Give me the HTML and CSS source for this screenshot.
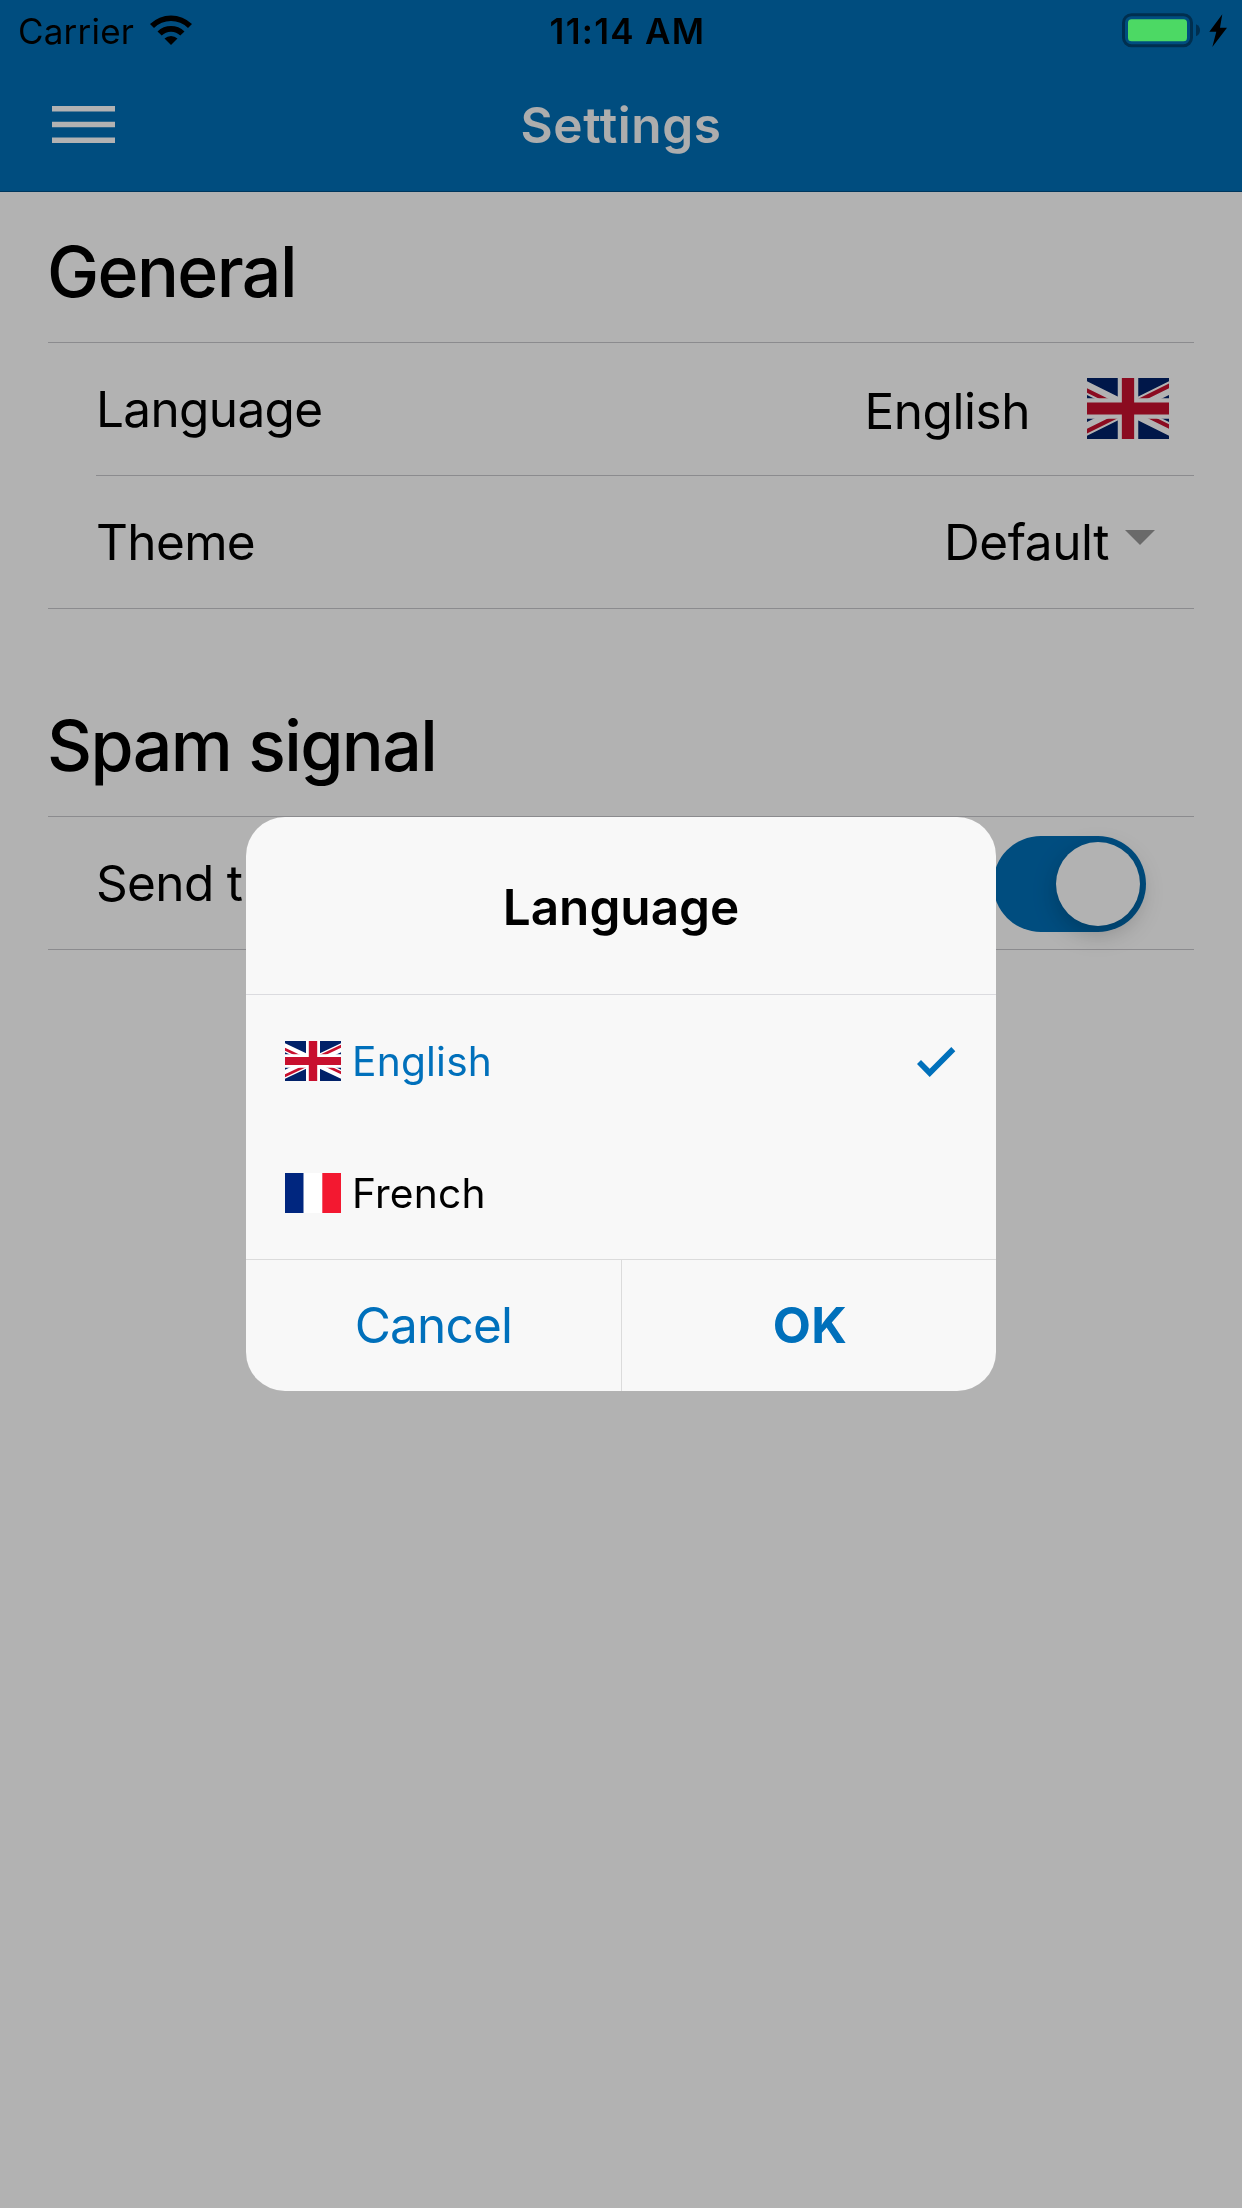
FILE: index.html
```html
<!DOCTYPE html>
<html lang="en">
<head>
<meta charset="utf-8">
<title>Settings</title>
<link rel="stylesheet" href="styles.css">
</head>
<body>
<svg width="0" height="0" class="defs" aria-hidden="true">
  <clipPath id="saltire"><path d="M30 15h30v15zv15h-30zh-30v-15zv-15h30z"/></clipPath>
  <symbol id="flag-gb" viewBox="10 0 40 30" preserveAspectRatio="none">
    <path fill="#012169" d="M0 0h60v30H0z"/>
    <path stroke="#fff" stroke-width="6" d="M0 0 60 30M60 0 0 30"/>
    <path stroke="#c8102e" stroke-width="4" clip-path="url(#saltire)" d="M0 0 60 30M60 0 0 30"/>
    <path stroke="#fff" stroke-width="10" d="M30 0v30M0 15h60"/>
    <path stroke="#c8102e" stroke-width="6" d="M30 0v30M0 15h60"/>
  </symbol>
</svg>
<div class="page">
  <header class="navbar">
    <svg class="menu" viewBox="0 0 63 37"><path fill="#fff" d="M0 0h63v5.500H0zM0 15.700h63v5.500H0zM0 31.400h63v5.500H0z"/></svg>
    <h1 class="navbar-title">Settings</h1>
  </header>
  <main>
    <section class="group">
      <h2 class="group-title">General</h2>
      <div class="list">
        <div class="row">
          <span class="label">Language</span>
          <span class="value value-language">English</span>
          <svg class="flag-large"><use href="#flag-gb"/></svg>
        </div>
        <div class="row">
          <span class="label">Theme</span>
          <span class="value value-theme">Default</span>
          <span class="caret"></span>
        </div>
      </div>
    </section>
    <section class="group">
      <h2 class="group-title">Spam signal</h2>
      <div class="list">
        <div class="row">
          <span class="label">Send t</span>
          <span class="switch"><span class="knob"></span></span>
        </div>
      </div>
    </section>
  </main>
</div>
<div class="backdrop">
  <div class="dialog">
    <h2 class="dialog-title">Language</h2>
    <div class="options">
      <div class="option selected">
        <svg class="flag"><use href="#flag-gb"/></svg>
        <span>English</span>
        <svg class="check" viewBox="0 0 38 30"><path fill="currentColor" d="M0 17 4 13 12.700 21.700 34.300 0 38.300 4.300 12.700 30z"/></svg>
      </div>
      <div class="option">
        <svg class="flag" viewBox="0 0 56 41" preserveAspectRatio="none"><path fill="#00267f" d="M0 0h18.700v41H0z"/><path fill="#fff" d="M18.700 0h18.600v41H18.700z"/><path fill="#f31830" d="M37.300 0H56v41H37.300z"/></svg>
        <span>French</span>
      </div>
    </div>
    <div class="actions">
      <span class="action cancel">Cancel</span>
      <span class="action ok">OK</span>
    </div>
  </div>
</div>
<div class="statusbar">
  <div class="status-left">
    <span class="carrier">Carrier</span>
    <svg class="wifi" viewBox="0 0 42 30">
      <path d="M0 9A30 30 0 0 1 42 9L38 13A24.300 24.300 0 0 0 4 13z"/>
      <path d="M7.500 16.400A19.300 19.300 0 0 1 34.500 16.400L30.300 20.600A13.300 13.300 0 0 0 11.700 20.600z"/>
      <path d="M14.500 23.500A9.400 9.400 0 0 1 27.500 23.500L21 30z"/>
    </svg>
  </div>
  <span class="time">11:14 AM</span>
  <svg class="battery" viewBox="0 0 106 36">
    <rect x="1.500" y="1.700" width="68" height="31" rx="8" fill="none" stroke="#002f4f" stroke-width="3"/>
    <rect x="6" y="6.200" width="59" height="22" rx="3.500" fill="#4cd964"/>
    <path fill="#002f4f" d="M74 11.300Q78 13 78 17.300T74 23.300z"/>
    <path d="M100.300 1.300 87.300 18.700H94.300L90.300 34 105 14.700H98z"/>
  </svg>
</div>
</body>
</html>
```
FILE: styles.css
```css
* { box-sizing: border-box; }
body {
  margin: 0;
  font-family: Inter, "Liberation Sans", sans-serif;
  font-size: 49.5px;
  color: #000;
  background: #fff;
}
h1, h2 { margin: 0; font-size: inherit; }
svg { display: block; flex: none; }
.defs { position: absolute; }
.page { height: 2208px; overflow: hidden; }

.navbar {
  display: grid;
  grid-template-columns: 63px 1fr 63px;
  align-items: center;
  height: 192px;
  padding: 57px 52px 0;
  background: #006fb7;
  border-bottom: 1px solid #005086;
}
.menu { width: 63px; height: 37px; }
.navbar-title {
  padding-top: 2px;
  text-align: center;
  font-weight: 600;
  letter-spacing: .6px;
  color: #f8f8f8;
}

.group { padding: 0 48px; }
.group + .group { margin-top: 57px; }
.group-title {
  height: 150px;
  margin-left: -1px;
  font-size: 69.8px;
  line-height: 159px;
  font-weight: 500;
  letter-spacing: -1.6px;
}
.list { border-top: 1px solid #c8c7cc; border-bottom: 1px solid #c8c7cc; }
.row {
  display: flex;
  align-items: center;
  height: 132px;
  margin-left: 48px;
  letter-spacing: -.65px;
}
.row + .row { height: 133px; border-top: 1px solid #c8c7cc; }
.value { margin-left: auto; letter-spacing: -.45px; }
.value-language { padding-top: 4px; margin-right: 57px; }
.flag-large { width: 82px; height: 61px; margin: 0 25px 2px 0; }
.value-theme { margin-right: 16px; }
.caret {
  border: 15px solid transparent;
  border-top-color: #999;
  border-bottom: 0;
  margin: -9px 39px 0 0;
}
.switch {
  width: 153px;
  height: 96px;
  margin: 2px 48px 0 auto;
  padding: 6px;
  border-radius: 48px;
  background: #006fb7;
  display: flex;
  justify-content: flex-end;
}
.knob {
  width: 84px;
  height: 84px;
  border-radius: 50%;
  background: #fff;
  box-shadow: 0 8px 24px rgba(0, 0, 0, .22);
}

.backdrop {
  position: fixed;
  inset: 0;
  display: flex;
  align-items: center;
  justify-content: center;
  background: rgba(0, 0, 0, .3);
}
.dialog {
  width: 750px;
  height: 574px;
  border-radius: 39px;
  background: #f8f8f8;
  overflow: hidden;
}
.dialog-title {
  height: 178px;
  padding-top: 2px;
  line-height: 177px;
  text-align: center;
  font-weight: 600;
  border-bottom: 1px solid #dbdbdf;
}
.options { border-bottom: 1px solid #dbdbdb; }
.option {
  display: flex;
  align-items: center;
  height: 132px;
  padding: 0 41px 0 39px;
  font-size: 40.7px;
  letter-spacing: .2px;
}
.flag { width: 56px; height: 40px; margin-right: 11px; }
.selected { color: #0070bb; }
.check { width: 38px; height: 30px; margin: 2px 0 0 auto; overflow: visible; }
.actions { display: grid; grid-template-columns: 376px 1fr; color: #0070bb; }
.action { height: 131px; line-height: 131px; text-align: center; }
.cancel { border-right: 1px solid #dbdbdb; letter-spacing: -.8px; }
.ok { padding-left: 2px; font-weight: 700; letter-spacing: .5px; }

.statusbar {
  position: fixed;
  inset: 0 0 auto;
  height: 60px;
  padding: 0 14px 0 18px;
  display: grid;
  grid-template-columns: 1fr auto 1fr;
  align-items: center;
  font-size: 35px;
}
.status-left { display: flex; align-items: center; }
.carrier { padding-top: 2px; letter-spacing: .2px; }
.wifi { width: 42px; height: 30px; margin-left: 16px; }
.time { padding: 2px 0 0 9px; font-weight: 600; letter-spacing: 1.3px; }
.battery { width: 106px; height: 36px; margin-top: 2px; justify-self: end; }
```
